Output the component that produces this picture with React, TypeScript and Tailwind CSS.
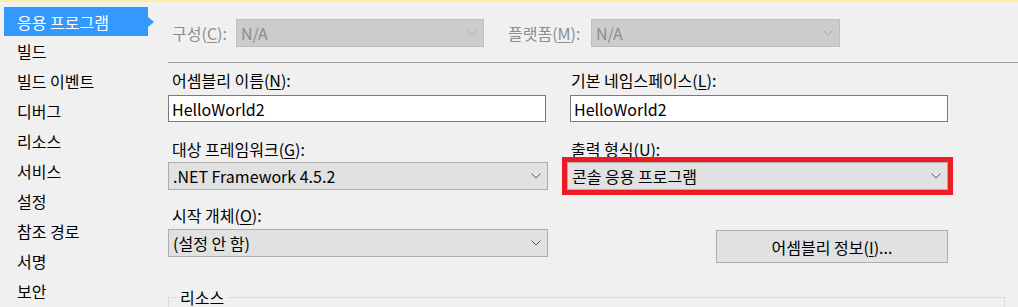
const font = "font-['Noto_Sans_CJK_KR','Noto_Sans',sans-serif]";

const menu = ["빌드", "빌드 이벤트", "디버그", "리소스", "서비스", "설정", "참조 경로", "서명", "보안"];

// label with mnemonic letter underlined, e.g. 구성(C):
function Label({ text, k, tail = "):", className = "" }: { text: string; k: string; tail?: string; className?: string }) {
  return (
    <span className={`whitespace-nowrap ${className}`}>
      {text}(<u className="underline-offset-2">{k}</u>{tail}
    </span>
  );
}

function cn(...c: string[]) {
  return c.filter(Boolean).join(" ");
}

function Chevron({ color }: { color: string }) {
  return (
    <svg width="10" height="6" viewBox="0 0 10 6" className="shrink-0">
      <polyline points="0.5,0.5 5,5 9.5,0.5" fill="none" stroke={color} strokeWidth="1" />
    </svg>
  );
}

function Combo({ value, disabled = false, className = "" }: { value: string; disabled?: boolean; className?: string }) {
  return (
    <div
      className={cn(
        "h-[28px] flex items-center justify-between border pl-[4px] pr-[6px]",
        disabled ? "bg-[#cccccc] border-[#bfbfbf] text-[#8d8d8d]" : "bg-[#e1e1e1] border-[#adadad] text-black",
        className
      )}
    >
      <span className="whitespace-nowrap">{value}</span>
      <Chevron color={disabled ? "#a8a8a8" : "#5a5a5a"} />
    </div>
  );
}

function Input({ value }: { value: string }) {
  return (
    <div className="h-[27px] bg-white border border-[#7a7a7a] pl-[3px] flex items-center">
      <span>{value}</span>
    </div>
  );
}

export default function App() {
  return (
    <div className={`w-[1018px] h-[307px] overflow-hidden bg-[#f0f0f0] text-[16px] leading-[20px] text-black ${font}`}>
      <div className="h-[2px] bg-[#fcf0a4]" />
      <div className="flex">
        {/* sidebar */}
        <div className="w-[168px] shrink-0 pt-[5px]">
          <div className="relative ml-[4px] w-[144px] h-[29px] bg-[#3399ff] text-white flex items-center pl-[13px]">
            <span>응용 프로그램</span>
            <span className="absolute left-full top-[10px] border-y-[5px] border-y-transparent border-l-[6px] border-l-[#3399ff]" />
          </div>
          {menu.map((m) => (
            <div key={m} className="h-[30px] flex items-center pl-[17px]">
              <span>{m}</span>
            </div>
          ))}
        </div>

        {/* content */}
        <div className="flex-1 flex flex-col">
          <div className="mt-[17px] h-[28px] flex items-center">
            <div className="w-[68px] pl-[4px] text-[#8d8d8d]">
              <Label text="구성" k="C" />
            </div>
            <Combo value="N/A" disabled className="w-[248px]" />
            <div className="w-[107px] pl-[24px] text-[#8d8d8d]">
              <Label text="플랫폼" k="M" />
            </div>
            <Combo value="N/A" disabled className="w-[249px]" />
          </div>

          <div className="mt-[15px] h-px bg-[#a0a0a0]" />

          <div className="flex">
            {/* left column */}
            <div className="w-[380px] flex flex-col">
              <div className="mt-[7px] pl-[4px]">
                <Label text="어셈블리 이름" k="N" />
              </div>
              <div className="mt-[5px] w-[378px]">
                <Input value="HelloWorld2" />
              </div>
              <div className="mt-[17px] pl-[4px]">
                <Label text="대상 프레임워크" k="G" />
              </div>
              <Combo value=".NET Framework 4.5.2" className="mt-[3px]" />
              <div className="mt-[15px] pl-[4px]">
                <Label text="시작 개체" k="O" />
              </div>
              <Combo value="(설정 안 함)" className="mt-[4px]" />
            </div>

            {/* right column */}
            <div className="ml-[22px] w-[378px] flex flex-col">
              <div className="mt-[7px] pl-[1px]">
                <Label text="기본 네임스페이스" k="L" />
              </div>
              <div className="mt-[5px]">
                <Input value="HelloWorld2" />
              </div>
              <div className="mt-[17px] pl-[1px]">
                <Label text="출력 형식" k="U" />
              </div>
              <Combo
                value="콘솔 응용 프로그램"
                className="mt-[3px] -ml-[3px] w-[381px] outline-[5px] outline-solid outline-[#ed1c24]"
              />
              <div className="mt-[40px] ml-[146px] w-[232px] h-[33px] bg-[#e1e1e1] border border-[#adadad] flex items-center justify-center">
                <span>
                  어셈블리 정보(<u className="underline-offset-2">I</u>)...
                </span>
              </div>
            </div>
          </div>

          <fieldset className="mt-[24px] w-[837px] h-[60px] border border-[#dcdcdc]">
            <legend className="ml-[8px] px-[3px]">리소스</legend>
          </fieldset>
        </div>
      </div>
    </div>
  );
}
